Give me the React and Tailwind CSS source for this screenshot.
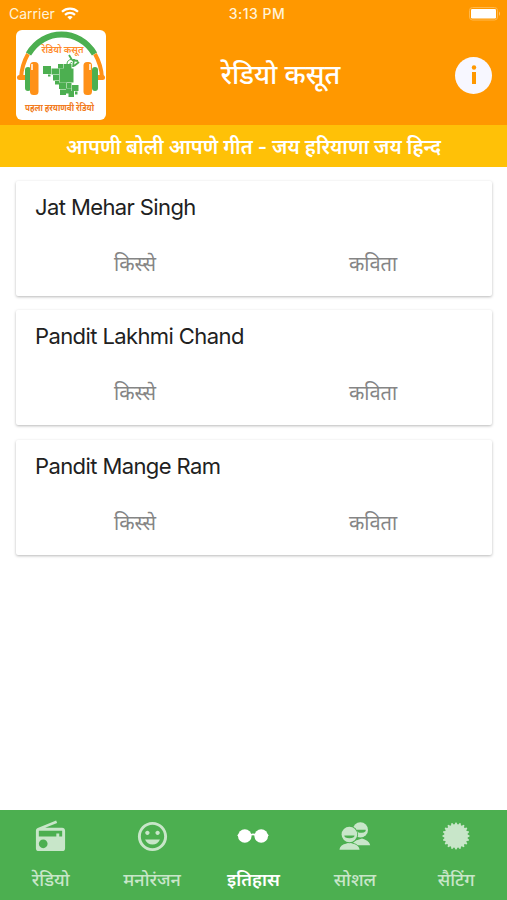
import React, { useState } from 'react';
import { MdRadio, MdInsertEmoticon } from 'react-icons/md';

const singers = [
  { id: 1, name: 'Jat Mehar Singh' },
  { id: 2, name: 'Pandit Lakhmi Chand' },
  { id: 3, name: 'Pandit Mange Ram' }
];

const GlassesIcon = () => (
  <svg width="36" height="36" viewBox="0 0 36 36" fill="currentColor">
    <circle cx="9.8" cy="18" r="6.8" />
    <circle cx="26.2" cy="18" r="6.8" />
    <path d="M2.200 17.200l2-1.700v4zM33.800 17.200l-2-1.700v4zM15.200 16.200q2.800-1.400 5.600 0v1.600q-2.800-1.200-5.600 0z" />
  </svg>
);

const PeopleIcon = () => (
  <svg width="36" height="36" viewBox="0 0 36 36" fill="currentColor">
    {/* back person */}
    <circle cx="23.4" cy="11.900" r="7.600" />
    <path d="M15 27.200c1-3.500 3-4.500 5.500-5.200l4.500-1.500c4 1.500 7.200 2.500 8.200 6.700z" />
    <path d="M20 11.800h8.700a4.300 2.600 0 0 1-8.700 .6z" fill="#4caf50" />
    {/* front person */}
    <path
      d="M2.500 31.700c.5-3.700 3-5.200 7-6.200l2.900-1 2.900 1c4 1 6.800 2.500 7.300 6.200z"
      stroke="#4caf50"
      strokeWidth="1.800"
      paintOrder="stroke"
    />
    <circle cx="12.400" cy="16.500" r="7.800" stroke="#4caf50" strokeWidth="1.800" paintOrder="stroke" />
    <path d="M7.300 17.500h10.200a5.100 2.800 0 0 1-10.200 0z" fill="#4caf50" />
  </svg>
);

const SettingsIcon = () => {
  // 20 blunt teeth around the disc
  const points = Array.from({ length: 80 }, (_, i) => {
    const r = i % 4 < 2 ? 13.6 : 11.8;
    const a = ((i - 0.5) * Math.PI) / 40;
    return `${(18 + r * Math.sin(a)).toFixed(2)},${(18 - r * Math.cos(a)).toFixed(2)}`;
  }).join(' ');

  return (
    <svg width="36" height="36" viewBox="0 0 36 36" fill="currentColor">
      <polygon points={points} />
    </svg>
  );
};

const tabs = [
  { id: 'radio', label: 'रेडियो', icon: <MdRadio size={35} /> },
  { id: 'fun', label: 'मनोरंजन', icon: <MdInsertEmoticon size={35} /> },
  { id: 'history', label: 'इतिहास', icon: <GlassesIcon /> },
  { id: 'social', label: 'सोशल', icon: <PeopleIcon /> },
  { id: 'settings', label: 'सैटिंग', icon: <SettingsIcon /> }
];

const Logo = () => (
  <svg width="90" height="90" viewBox="0 0 90 90" className="rounded-md bg-white">
    {/* headphones */}
    <path d="M12.500 24C28-2 63-2 78.500 24" fill="none" stroke="#4caf50" strokeWidth="6" />
    <path d="M12 24C8 31 5.500 38 5 48M79 24C83 31 85.500 38 86 48" fill="none" stroke="#ff9118" strokeWidth="4" />
    <rect x="1" y="45" width="10" height="5" rx="2.500" fill="#ff9118" />
    <rect x="79" y="45" width="10" height="5" rx="2.500" fill="#ff9118" />
    <rect x="9" y="37" width="6" height="24" rx="3" fill="#4caf50" />
    <rect x="76" y="37" width="6" height="24" rx="3" fill="#4caf50" />
    <rect x="14" y="32" width="8.500" height="33" rx="3.500" fill="#ff9118" />
    <rect x="67.500" y="32" width="8.500" height="33" rx="3.500" fill="#ff9118" />
    <path d="M16 34v6M74 34v6" stroke="#fff" strokeWidth="1.500" />
    {/* blocks of the map */}
    <g fill="#4caf50">
      <rect x="27" y="36" width="8" height="8" />
      <rect x="35.500" y="38.500" width="7.500" height="6" />
      <rect x="32" y="44.500" width="2.500" height="2" />
      <rect x="37" y="45" width="6" height="5.500" />
      <rect x="39" y="51" width="4" height="3.500" />
      <rect x="42" y="34" width="5" height="4.500" />
      <rect x="47.500" y="34" width="8" height="5" />
      <rect x="43.500" y="38.500" width="14" height="14" />
      <rect x="43" y="52.500" width="7.500" height="6.500" />
      <rect x="51" y="53" width="4.500" height="5.500" />
      <rect x="56" y="55" width="6.500" height="6" />
      <rect x="44" y="59.500" width="6" height="5.500" />
      <rect x="50" y="58.500" width="5.500" height="5" />
      <rect x="52.500" y="61" width="5.500" height="6" />
      <rect x="59" y="61.500" width="2.500" height="3" />
    </g>
    <path d="M53 25l3 5M56 30l6 1M58 29l-1 8M63 32l-5 4" fill="none" stroke="#4caf50" strokeWidth="1.800" />
    <path d="M51 34c0-3 2-4.500 4.500-4.500M53.500 35c0-1.500 1-2.500 2.500-2.500" fill="none" stroke="#4caf50" strokeWidth="1" />
    <text x="46.500" y="22.500" fontSize="9" fontWeight="600" textAnchor="middle" textLength="42" lengthAdjust="spacingAndGlyphs" fill="#ff8a2a">
      रेडियो कसूत
    </text>
    <text x="43.500" y="81" fontSize="9" fontWeight="700" textAnchor="middle" textLength="69" lengthAdjust="spacingAndGlyphs" fill="#f27b20">
      पहला हरयाणवी रेडियो
    </text>
  </svg>
);

const StatusBar = () => (
  <div className="grid h-[27px] grid-cols-3 items-center pl-[9px] pr-1.5 text-[#fff3d9]">
    <div className="flex items-center gap-1.5">
      <span className="text-sm">Carrier</span>
      <svg width="18" height="13" viewBox="0 0 18 13" fill="none" stroke="white" strokeWidth="2.200">
        <path d="M1 4.700C5.500.500 12.500.500 17 4.700M4 7.900c2.800-2.600 7.200-2.600 10 0" />
        <path d="M9 12.800L6.300 10c1.500-1.400 3.900-1.400 5.400 0z" fill="white" stroke="none" />
      </svg>
    </div>
    <span className="pl-1 text-center text-sm font-medium tracking-[0.5px]">3:13 PM</span>
    <svg className="justify-self-end" width="32" height="14" viewBox="0 0 32 14">
      <rect x="0.500" y="0.500" width="28" height="12.500" rx="3" fill="none" stroke="#ffb84d" />
      <rect x="2" y="2" width="25" height="9.500" rx="1.200" fill="white" />
      <path d="M30 4.500q2 2.200 0 4.400z" fill="#ffc773" />
    </svg>
  </div>
);

const SingerCard = ({ name }) => (
  <div className="h-[115px] rounded-xs bg-white pt-2.5 shadow-[0_1px_3px_rgba(0,0,0,0.28)]">
    <h2 className="pl-[19px] text-[22px] leading-8 tracking-[-0.6px] text-[#212121]">{name}</h2>
    <div className="mt-[25px] grid grid-cols-2 text-center text-xl leading-8 text-[#858585]">
      <button>किस्से</button>
      <button>कविता</button>
    </div>
  </div>
);

const App = () => {
  const [activeTab, setActiveTab] = useState('history');

  return (
    <div className="flex h-screen flex-col bg-white font-['Inter','Noto_Sans_Devanagari','Noto_Sans',sans-serif]">
      <header className="h-[125px] bg-[#ff9800]">
        <StatusBar />
        <div className="grid grid-cols-[90px_1fr_37px] items-center pl-4 pr-[15px] pt-[3px]">
          <Logo />
          <h1 className="text-center text-[27px] font-medium text-white">रेडियो कसूत</h1>
          <button className="flex size-[37px] items-center justify-center rounded-full bg-[#f7f7ff] text-[#ff9800]">
            <svg width="8" height="20" viewBox="0 0 8 20" fill="currentColor">
              <circle cx="4" cy="2.500" r="2.200" />
              <rect x="2" y="7" width="4" height="12" />
            </svg>
          </button>
        </div>
      </header>

      <div className="flex h-[42px] items-center justify-center bg-[#ffc107] pt-0.5 text-xl font-semibold text-white">
        आपणी बोली आपणे गीत - जय हरियाणा जय हिन्द
      </div>

      <main className="flex flex-1 flex-col gap-[14.4px] px-4 pr-[15px] pt-3.5">
        {singers.map(singer => (
          <SingerCard key={singer.id} name={singer.name} />
        ))}
      </main>

      {/* bottom navigation */}
      <nav className="grid h-[90px] grid-cols-5 bg-[#4caf50]">
        {tabs.map(tab => (
          <button
            key={tab.id}
            onClick={() => setActiveTab(tab.id)}
            className={`flex flex-col items-center pt-2 ${
              activeTab === tab.id ? 'font-semibold text-white' : 'font-medium text-[#c8e6c9]'
            }`}
          >
            <span className="flex h-9 items-center">{tab.icon}</span>
            <span className="mt-3 text-lg leading-7 whitespace-nowrap">{tab.label}</span>
          </button>
        ))}
      </nav>
    </div>
  );
};

export default App;
